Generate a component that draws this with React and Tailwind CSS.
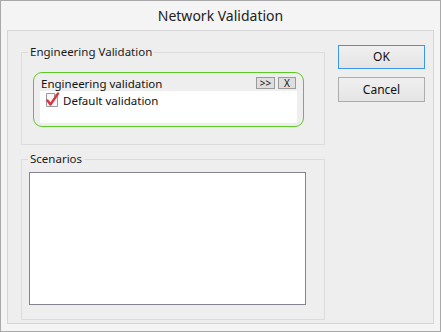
import React from 'react';

function PageCheck() {
  return (
    <svg width="15" height="15" viewBox="0 0 15 15" className="shrink-0">
      <path d="M1.5 1.5 H9.5 L12.5 4.5 V14.5 H1.5 Z" fill="#f7f7f9" stroke="#9a9aa4" />
      <path d="M9.5 1.5 V4.5 H12.5" fill="#e2e2e6" stroke="#9a9aa4" />
      <path d="M2.5 8.5 L5.5 12.5 L13 1.5" fill="none" stroke="#d9363e" strokeWidth="2.4" strokeLinecap="round" strokeLinejoin="round" />
    </svg>
  );
}

function GroupBox({ label, className, children }) {
  return (
    <fieldset className={`border border-[#dcdcdc] ${className}`}>
      <legend className="ml-[6px] px-[2px] text-[11.5px] leading-[16px] text-[#1a1a1a]">{label}</legend>
      {children}
    </fieldset>
  );
}

export default function App() {
  return (
    <div className="w-[441px] h-[332px] border border-[#a9a9a9] bg-[#f4f4f4] flex flex-col font-['Noto_Sans',sans-serif] text-[#111]">
      <div className="h-[29px] flex items-center justify-center text-[14px] text-[#222] pb-[1px]">Network Validation</div>

      <div className="mx-[6px] h-[294px] border border-[#d6d6d6] bg-[#eeeeee] flex">
        {/* left column */}
        <div className="flex flex-col pl-[13px] pt-[13px] gap-[6px]">
          <GroupBox label="Engineering Validation" className="w-[304px] h-[101px]">
            <div className="ml-[11px] mt-[12px] w-[271px] h-[55px] border border-[#5cc926] rounded-[9px] flex flex-col px-[6px] pt-[3px]">
              <div className="h-[15px] overflow-hidden flex items-start">
                <span className="text-[11.5px] leading-[15px] text-[#111] flex-1 pl-[1px]">Engineering validation</span>
                <div className="flex gap-[3px] pt-[1px] pr-[1px]">
                  <button className="w-[19px] h-[12px] border border-[#9a9a9a] bg-[#dedede] text-[10px] leading-[10px] text-[#111] flex items-center justify-center">&gt;&gt;</button>
                  <button className="w-[18px] h-[12px] border border-[#9a9a9a] bg-[#dedede] text-[10px] leading-[10px] text-[#111] flex items-center justify-center">X</button>
                </div>
              </div>
              <div className="h-[32px] bg-white flex items-start gap-[3px] pl-[5px] pt-[1px]">
                <PageCheck />
                <span className="text-[11.5px] leading-[15px] text-[#111] pt-[1px]">Default validation</span>
              </div>
            </div>
          </GroupBox>

          <GroupBox label="Scenarios" className="w-[304px] h-[169px]">
            <div className="ml-[7px] mt-[5px] w-[277px] h-[133px] border border-[#84838f] bg-white" />
          </GroupBox>
        </div>

        {/* buttons */}
        <div className="flex flex-col pl-[13px] pt-[14px] gap-[8px]">
          <button className="w-[87px] h-[24px] border border-[#3c97e8] bg-gradient-to-b from-[#f0f0f0] to-[#e4e4e4] text-[12px] text-[#111]">OK</button>
          <button className="w-[87px] h-[25px] border border-[#adadad] bg-gradient-to-b from-[#f0f0f0] to-[#e4e4e4] text-[12px] text-[#111]">Cancel</button>
        </div>
      </div>
    </div>
  );
}
